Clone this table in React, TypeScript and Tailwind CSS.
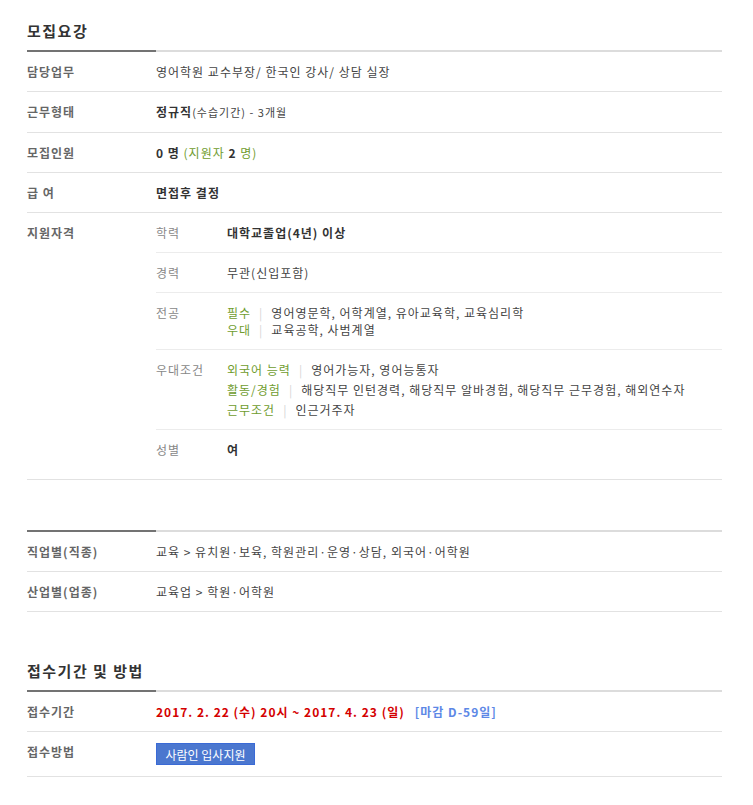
import type { ReactNode } from "react"

const green = "text-[#6f9c2e]"

function ThickLine() {
  return (
    <div className="flex h-[2px]">
      <div className="w-[129px] bg-[#737373]" />
      <div className="flex-1 bg-[#dcdcdc]" />
    </div>
  )
}

function Title({ children }: { children: ReactNode }) {
  return <h2 className="text-[15px] font-bold leading-[22px] pb-[8px] tracking-[1.5px] text-[#333]">{children}</h2>
}

function Row({ label, children }: { label: string; children: ReactNode }) {
  return (
    <div className="flex border-b border-[#e2e2e2]">
      <div className="w-[129px] shrink-0 py-[11px] font-bold text-[#666]">{label}</div>
      <div className="flex-1 py-[11px] text-[#444]">{children}</div>
    </div>
  )
}

function Bar() {
  return <span className="mx-[8px] text-[#d5d5d5]">|</span>
}

const subRows: { label: string; last?: boolean; body: ReactNode }[] = [
  { label: "학력", body: <b className="text-[#333]">대학교졸업(4년) 이상</b> },
  { label: "경력", body: <span>무관(신입포함)</span> },
  {
    label: "전공",
    body: (
      <>
        <div>
          <span className={green}>필수</span>
          <Bar />
          영어영문학, 어학계열, 유아교육학, 교육심리학
        </div>
        <div>
          <span className={green}>우대</span>
          <Bar />
          교육공학, 사범계열
        </div>
      </>
    ),
  },
  {
    label: "우대조건",
    body: (
      <div className="flex flex-col gap-[3px]">
        <div>
          <span className={green}>외국어 능력</span>
          <Bar />
          영어가능자, 영어능통자
        </div>
        <div>
          <span className={green}>활동/경험</span>
          <Bar />
          해당직무 인턴경력, 해당직무 알바경험, 해당직무 근무경험, 해외연수자
        </div>
        <div>
          <span className={green}>근무조건</span>
          <Bar />
          인근거주자
        </div>
      </div>
    ),
  },
  { label: "성별", last: true, body: <b className="text-[#333]">여</b> },
]

export default function App() {
  return (
    <div className="ml-[27px] w-[695px] pt-[20px] pb-[20px] text-[12px] leading-[17px] tracking-[1px] text-[#444] font-['Noto_Sans_CJK_KR','Noto_Sans',sans-serif]">
      {/* 모집요강 */}
      <Title>모집요강</Title>
      <ThickLine />
      <Row label="담당업무">영어학원 교수부장/ 한국인 강사/ 상담 실장</Row>
      <Row label="근무형태">
        <b className="text-[#333]">정규직</b>
        <span className="text-[11px]">(수습기간) - 3개월</span>
      </Row>
      <Row label="모집인원">
        <b className="text-[#333]">0 명</b> <span className={green}>(지원자 </span>
        <b className="text-[#333]">2</b>
        <span className={green}> 명)</span>
      </Row>
      <Row label="급 여">
        <b className="text-[#333]">면접후 결정</b>
      </Row>
      <div className="flex border-b border-[#e2e2e2] pb-[10px]">
        <div className="w-[129px] shrink-0 py-[11px] font-bold text-[#666]">지원자격</div>
        <div className="flex-1">
          {subRows.map((r) => (
            <div key={r.label} className={`flex py-[11px] ${r.last ? "" : "border-b border-[#ececec]"}`}>
              <div className="w-[71px] shrink-0 text-[#888]">{r.label}</div>
              <div className="flex-1">{r.body}</div>
            </div>
          ))}
        </div>
      </div>

      {/* 직종 / 업종 */}
      <div className="mt-[50px]">
        <ThickLine />
        <Row label="직업별(직종)">교육 &gt; 유치원·보육, 학원관리·운영·상담, 외국어·어학원</Row>
        <Row label="산업별(업종)">교육업 &gt; 학원·어학원</Row>
      </div>

      {/* 접수기간 및 방법 */}
      <div className="mt-[48px]">
        <Title>접수기간 및 방법</Title>
        <ThickLine />
        <Row label="접수기간">
          <b className="text-[#d40000]">2017. 2. 22 (수) 20시 ~ 2017. 4. 23 (일)</b>
          <b className="ml-[10px] text-[#5d88e6]">[마감 D-59일]</b>
        </Row>
        <Row label="접수방법">
          <button className="flex h-[22px] w-[99px] items-center justify-center border border-[#3a6ad6] bg-[#4b77cf] text-[12px] tracking-normal text-white">
            사람인 입사지원
          </button>
        </Row>
      </div>
    </div>
  )
}
